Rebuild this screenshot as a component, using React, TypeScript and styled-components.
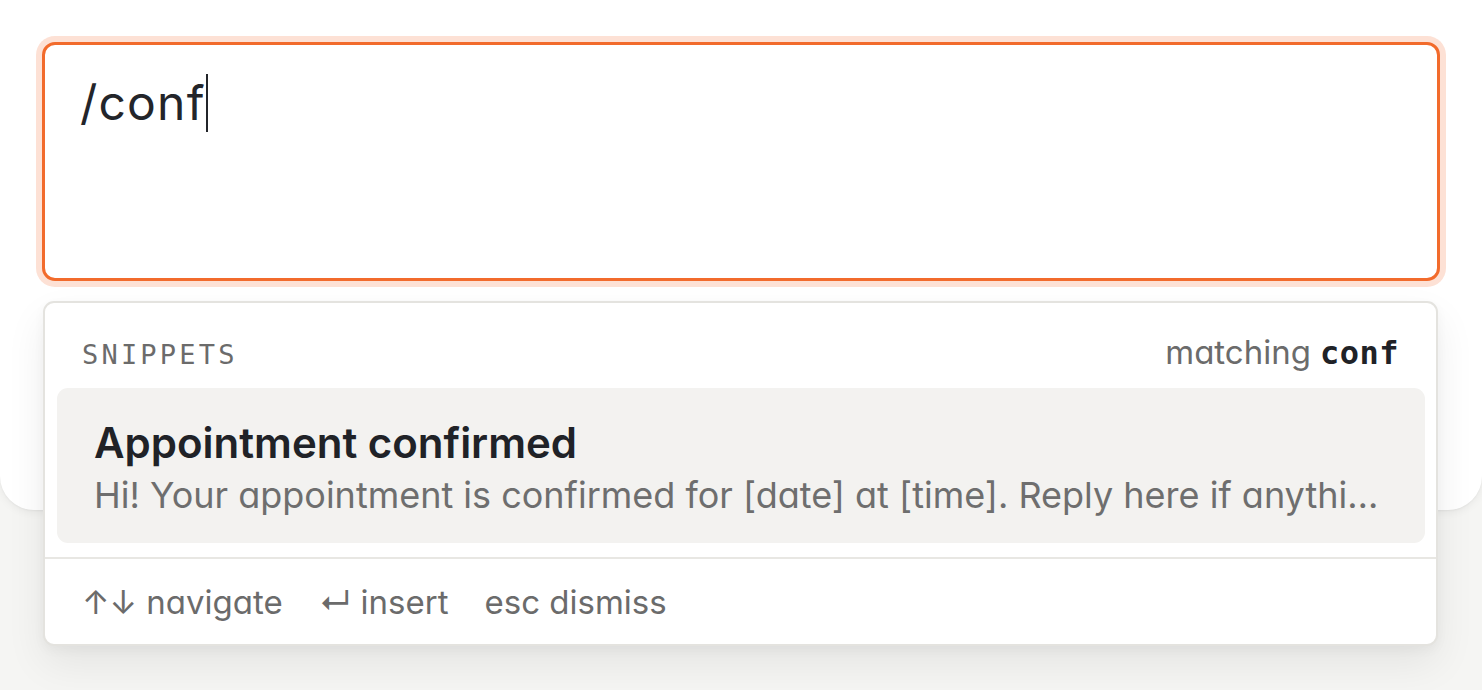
import React from "react";
import styled, { createGlobalStyle } from "styled-components";

const GlobalStyle = createGlobalStyle`
  html, body {
    margin: 0;
    padding: 0;
    background: #f5f5f3;
    font-family: Inter, "Noto Sans", sans-serif;
    font-feature-settings: "cv11" 1;
  }
  * { box-sizing: border-box; }
`;

const Page = styled.div`
  position: relative;
  width: 1482px;
  height: 690px;
  overflow: hidden;
`;

const Card = styled.div`
  position: relative;
  height: 510px;
  background: #ffffff;
  border-radius: 0 0 34px 34px;
  box-shadow: 0 2px 10px rgba(0, 0, 0, 0.06), 0 1px 2px rgba(0, 0, 0, 0.04);
  padding: 42px 42px 0 42px;
`;

const Composer = styled.div`
  position: relative;
  height: 239px;
  border: 3px solid #f26b2c;
  border-radius: 13px;
  box-shadow: 0 0 0 6px #fde1d5;
  background: #ffffff;
  padding: 29px 35px;
`;

const ComposerText = styled.div`
  font-family: Inter, "Noto Sans", sans-serif;
  font-feature-settings: "cv11" 1;
  font-size: 48px;
  line-height: 58px;
  color: #23252a;
  letter-spacing: 1.2px;
`;

const Caret = styled.span`
  display: inline-block;
  width: 2.5px;
  height: 58px;
  background: #23252a;
  vertical-align: top;
  margin-left: 0;
`;

const Popup = styled.div`
  position: absolute;
  left: 43px;
  top: 301px;
  width: 1395px;
  height: 345px;
  background: #ffffff;
  border: 2px solid #e4e3df;
  border-radius: 11px;
  box-shadow: 0 18px 40px rgba(0, 0, 0, 0.07), 0 4px 12px rgba(0, 0, 0, 0.04);
  display: flex;
  flex-direction: column;
`;

const Header = styled.div`
  display: flex;
  justify-content: space-between;
  align-items: baseline;
  padding: 29px 37px 0 37px;
  height: 85px;
`;

const SectionLabel = styled.span`
  font-family: "DejaVu Sans Mono", "Liberation Mono", monospace;
  font-size: 27px;
  letter-spacing: 3.2px;
  color: #6b6b6b;
`;

const MatchInfo = styled.span`
  font-family: Inter, "Noto Sans", sans-serif;
  font-feature-settings: "cv11" 1;
  font-size: 33px;
  color: #6b6b6b;
`;

const MatchTerm = styled.b`
  font-family: "DejaVu Sans Mono", "Liberation Mono", monospace;
  font-size: 32px;
  font-weight: 700;
  letter-spacing: 0.5px;
  color: #202227;
  margin-left: 9px;
`;

const List = styled.div`
  padding: 0 11px 14px 12px;
`;

const Item = styled.div<{ $active?: boolean }>`
  height: 155px;
  border-radius: 11px;
  background: ${(p) => (p.$active ? "#f3f2f0" : "transparent")};
  padding: 29px 37px 0 37px;
  display: flex;
  flex-direction: column;
`;

const ItemTitle = styled.div`
  font-family: Inter, "Noto Sans", sans-serif;
  font-weight: 600;
  font-size: 42px;
  line-height: 52px;
  color: #202227;
`;

const ItemPreview = styled.div`
  font-family: Inter, "Noto Sans", sans-serif;
  font-feature-settings: "cv11" 1;
  font-size: 36px;
  line-height: 50px;
  margin-top: 1px;
  color: #6e6e6e;
  white-space: nowrap;
  overflow: hidden;
  text-overflow: ellipsis;
`;

const Divider = styled.div`
  height: 2px;
  background: #e8e7e3;
`;

const Footer = styled.div`
  display: flex;
  align-items: center;
  gap: 36px;
  padding: 0 37px;
  flex: 1;
`;

const Hint = styled.span`
  font-family: Inter, "Noto Sans", sans-serif;
  font-feature-settings: "cv11" 1;
  font-size: 33px;
  color: #6b6b6b;
  white-space: nowrap;
`;

export default function App() {
  return (
    <>
      <GlobalStyle />
      <Page>
        <Card>
          <Composer>
            <ComposerText>
              /conf
              <Caret />
            </ComposerText>
          </Composer>
        </Card>
        <Popup>
          <Header>
            <SectionLabel>SNIPPETS</SectionLabel>
            <MatchInfo>
              matching<MatchTerm>conf</MatchTerm>
            </MatchInfo>
          </Header>
          <List>
            <Item $active>
              <ItemTitle>Appointment confirmed</ItemTitle>
              <ItemPreview>
                Hi! Your appointment is confirmed for [date] at [time]. Reply here if anything changes.
              </ItemPreview>
            </Item>
          </List>
          <Divider />
          <Footer>
            <Hint>↑↓ navigate</Hint>
            <Hint>↵ insert</Hint>
            <Hint>esc dismiss</Hint>
          </Footer>
        </Popup>
      </Page>
    </>
  );
}
